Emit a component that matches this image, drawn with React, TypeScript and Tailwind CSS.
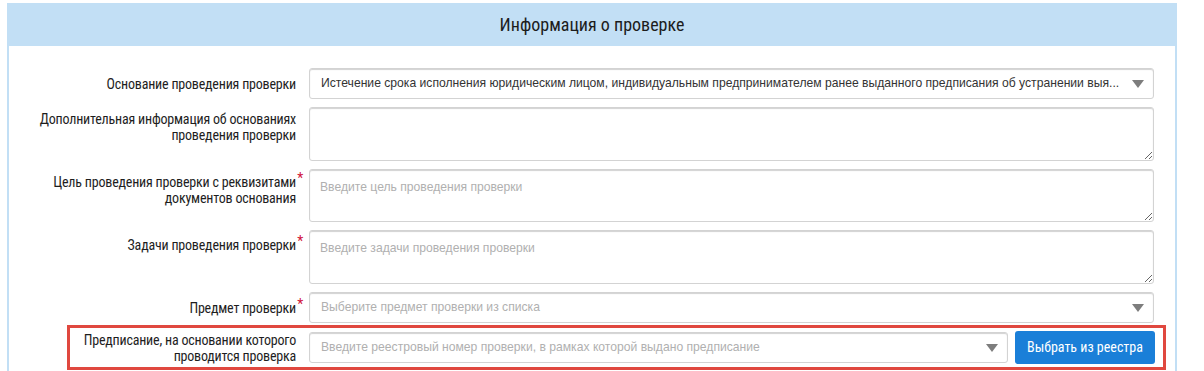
const condensed = { fontFamily: '"Roboto Condensed", Roboto, "Liberation Sans", sans-serif' }

function Caret() {
  return (
    <svg width="12" height="8" viewBox="0 0 12 8" className="shrink-0">
      <path d="M0 0 L12 0 L6 8 Z" fill="#7d7d7d" />
    </svg>
  )
}

function Label({ children, required }: { children: React.ReactNode; required?: boolean }) {
  return (
    <div
      className="relative whitespace-nowrap text-right text-[14px] leading-[16px] tracking-[-0.2px] text-[#1e1e1e]"
      style={condensed}
    >
      {children}
      {required && <span className="absolute -right-[7px] -top-[4px] text-[14px] text-[#d0123a]">*</span>}
    </div>
  )
}

const fieldBox =
  'rounded-[3px] border border-[#d3d3d3] bg-white shadow-[inset_0_1px_1px_rgba(0,0,0,0.18)] font-["Liberation_Sans",Arial,sans-serif] text-[12.15px]'

function Select({ value, placeholder, className = '' }: { value?: string; placeholder?: string; className?: string }) {
  return (
    <div className={`${fieldBox} flex h-[31px] items-center pl-[11px] pr-[9px] ${className}`}>
      <span
        className={`flex-1 overflow-hidden whitespace-nowrap ${value ? 'text-[#333]' : 'text-[#b0b0b0]'}`}
      >
        {value ?? placeholder}
      </span>
      <Caret />
    </div>
  )
}

function Area({ placeholder, h }: { placeholder?: string; h: string }) {
  return (
    <textarea
      placeholder={placeholder}
      className={`${fieldBox} block w-[845px] ${h} px-[10px] py-[8px] text-[#333] outline-none placeholder:text-[#b0b0b0]`}
    />
  )
}

export default function App() {
  return (
    <div className="h-[371px] w-[1204px] overflow-hidden bg-white">
      <div className="ml-[7px] mt-[3px] h-[368px] w-[1170px] border-x-2 border-[#c2dff5]">
        <div
          className="flex h-[43px] items-center justify-center bg-[#c2dff5] text-[18px] text-[#1c1c1c]"
          style={condensed}
        >
          Информация о проверке
        </div>

        <div className="mt-[22px] flex flex-col">
          <div className="grid grid-cols-[287px_845px] items-center gap-x-[13px]">
            <Label>Основание проведения проверки</Label>
            <Select value="Истечение срока исполнения юридическим лицом, индивидуальным предпринимателем ранее выданного предписания об устранении выя..." />
          </div>

          <div className="mt-[8px] grid grid-cols-[287px_845px] items-start gap-x-[13px]">
            <div className="pt-[4px]">
              <Label>
                Дополнительная информация об основаниях
                <br />
                проведения проверки
              </Label>
            </div>
            <Area h="h-[54px]" />
          </div>

          <div className="mt-[8px] grid grid-cols-[287px_845px] items-start gap-x-[13px]">
            <div className="pt-[5px]">
              <Label required>
                Цель проведения проверки с реквизитами
                <br />
                документов основания
              </Label>
            </div>
            <Area h="h-[53px]" placeholder="Введите цель проведения проверки" />
          </div>

          <div className="mt-[8px] grid grid-cols-[287px_845px] items-start gap-x-[13px]">
            <div className="pt-[7px]">
              <Label required>Задачи проведения проверки</Label>
            </div>
            <Area h="h-[54px]" placeholder="Введите задачи проведения проверки" />
          </div>

          <div className="mt-[8px] grid grid-cols-[287px_845px] items-center gap-x-[13px]">
            <Label required>Предмет проверки</Label>
            <Select placeholder="Выберите предмет проверки из списка" />
          </div>

          <div className="ml-[58px] mt-[2px] flex h-[45px] w-[1099px] items-center border-[3px] border-[#e0483f] pr-[8px]">
            <div className="w-[226px] shrink-0">
              <Label>
                Предписание, на основании которого
                <br />
                проводится проверка
              </Label>
            </div>
            <Select
              className="ml-[13px] w-[699px]"
              placeholder="Введите реестровый номер проверки, в рамках которой выдано предписание"
            />
            <button
              className="ml-[7px] h-[33px] w-[140px] rounded-[3px] bg-[#1a7fd8] text-[14px] text-white"
              style={condensed}
            >
              Выбрать из реестра
            </button>
          </div>
        </div>
      </div>
    </div>
  )
}
